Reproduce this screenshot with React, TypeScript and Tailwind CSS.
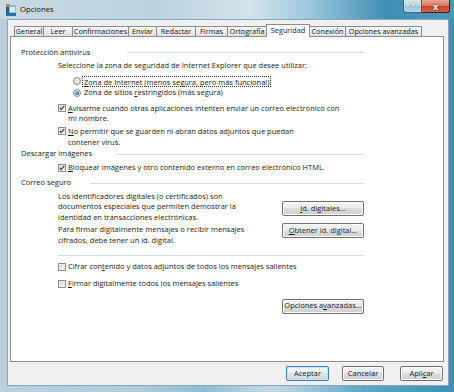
import React from "react";

function Check({ checked }: { checked: boolean }) {
  return (
    <svg width="8" height="8" viewBox="0 0 8 8" className="shrink-0">
      <defs>
        <linearGradient id="cbg" x1="0" y1="0" x2="1" y2="1">
          <stop offset="0" stopColor="#d4d4d4" />
          <stop offset="1" stopColor="#fafafa" />
        </linearGradient>
      </defs>
      <rect x="0.5" y="0.5" width="7" height="7" fill="#f6f6f6" stroke="#8e8f8f" />
      <rect x="1.5" y="1.5" width="5" height="5" fill="url(#cbg)" />
      {checked && (
        <path d="M1.8 3.9 L3.2 5.6 L6.3 1.9" stroke="#2c4f80" strokeWidth="1.3" fill="none" />
      )}
    </svg>
  );
}

function Radio({ checked }: { checked: boolean }) {
  return (
    <svg width="8" height="8" viewBox="0 0 8 8" className="shrink-0">
      <defs>
        <radialGradient id="rdot" cx="0.4" cy="0.35" r="0.7">
          <stop offset="0" stopColor="#9ad0f4" />
          <stop offset="1" stopColor="#1f4f8c" />
        </radialGradient>
      </defs>
      <circle cx="4" cy="4" r="3.5" fill="#e6e6e6" stroke="#8e8f8f" />
      {checked && <circle cx="4" cy="4" r="2.1" fill="url(#rdot)" />}
    </svg>
  );
}

function Btn({ children, className = "", def = false }: { children: React.ReactNode; className?: string; def?: boolean }) {
  return (
    <div
      className={
        "h-[15px] shrink-0 flex items-center justify-center rounded-[2px] border " +
        (def
          ? "border-[#3c7fb1] bg-[linear-gradient(180deg,#f4f8fb_0%,#ecf1f5_50%,#dde5ec_50%,#d0dae3_100%)] shadow-[inset_0_0_0_1px_#c7e3f6] "
          : "border-[#707070] bg-[linear-gradient(180deg,#f3f3f3_0%,#ebebeb_50%,#dddddd_50%,#cfcfcf_100%)] shadow-[inset_0_0_0_1px_#fcfcfc] ") +
        className
      }
    >
      {children}
    </div>
  );
}

function Header({ label, textW }: { label: string; textW: string }) {
  return (
    <div className="flex items-center h-[11px] ml-[10px] w-[343px]">
      <span className={"shrink-0 " + textW}>{label}</span>
      <div className="flex-1 h-px bg-[#d5dfe5]" />
    </div>
  );
}

const tabs: { label: string; w: string; sel?: boolean }[] = [
  { label: "General", w: "w-[30px]" },
  { label: "Leer", w: "w-[30px]" },
  { label: "Confirmaciones", w: "w-[57px]" },
  { label: "Enviar", w: "w-[29px]" },
  { label: "Redactar", w: "w-[40px]" },
  { label: "Firmas", w: "w-[33px]" },
  { label: "Ortografía", w: "w-[40px]" },
  { label: "Seguridad", w: "w-[44px]", sel: true },
  { label: "Conexión", w: "w-[37px]" },
  { label: "Opciones avanzadas", w: "w-[77px]" },
];

export default function App() {
  return (
    <div className="w-[454px] h-[392px] overflow-hidden flex flex-col bg-[linear-gradient(90deg,#b9d0dc_0%,#b0ccda_30%,#8cbdd5_45%,#c4dae5_60%,#5ea6c9_80%,#3f8db5_100%)] font-['Open_Sans','Noto_Sans',sans-serif] text-[7.5px] text-[#1b1b1b]">
      {/* Title bar */}
      <div className="h-[19px] flex items-start shrink-0 bg-[linear-gradient(90deg,#c7d9e3_0%,#bcd2de_35%,#d3e4ec_55%,#9cc8dc_68%,#3f8fb5_85%,#4a97bd_100%)]">
        <svg width="10" height="12" viewBox="0 0 10 12" className="ml-[6px] mt-[4px] shrink-0">
          <rect x="0" y="1" width="10" height="11" fill="#7cc3e6" />
          <rect x="0" y="1" width="3" height="11" fill="#1f5e99" />
          <rect x="0" y="9" width="10" height="3" fill="#2a6fa8" />
          <rect x="0" y="0" width="4" height="3" fill="#e07f2a" />
          <rect x="4" y="3" width="5" height="5" fill="#d8eef9" />
        </svg>
        <span className="ml-[4px] mt-[4px] text-[7.7px] leading-[11px] text-[#101010]">Opciones</span>
        <div className="ml-auto mr-[4px] flex">
          <div className="w-[19px] h-[13px] flex items-center justify-center rounded-bl-[3px] border border-t-0 border-[#3f6379] bg-[linear-gradient(180deg,#d9e8ef_0%,#b7d3e2_50%,#9cc3d8_50%,#b8d9ea_100%)] text-white text-[8px] font-bold [text-shadow:0_0_2px_#2d4d62]">
            ?
          </div>
          <div className="w-[28px] h-[13px] flex items-center justify-center rounded-br-[3px] border border-t-0 border-l-0 border-[#4a1c12] bg-[linear-gradient(180deg,#e8a797_0%,#d8735e_50%,#c3432b_50%,#d8623c_100%)] text-white text-[9px] font-bold leading-none [text-shadow:0_0_2px_#5a1a0c]">
            x
          </div>
        </div>
      </div>

      {/* Client area */}
      <div className="flex-1 ml-[7px] mr-[5px] mb-[6px] bg-[#f0f0f0] border border-[#8ba5b5] flex flex-col pt-[4px]">
        {/* Tabs */}
        <div className="h-[12px] flex items-end ml-[6px] relative z-10 text-[7.3px]">
          {tabs.map((t, i) => (
            <div
              key={t.label}
              className={
                "flex items-center justify-center border border-b-0 border-[#898c95] whitespace-nowrap " +
                t.w +
                (i > 0 ? " -ml-px" : "") +
                (t.sel
                  ? " h-[13px] -mb-px bg-white relative z-10 pb-[1px]"
                  : " h-[10px] bg-[linear-gradient(180deg,#f7f7f7_0%,#ececec_50%,#e1e1e1_100%)]")
              }
            >
              {t.label}
            </div>
          ))}
        </div>

        {/* Panel */}
        <div className="h-[326px] ml-[2px] mr-[4px] bg-white border border-[#898c95] flex flex-col">
          <div className="mt-[10px]">
            <Header label="Protección antivirus" textW="w-[106px]" />
          </div>
          <div className="mt-[2px] ml-[47px] h-[11px] leading-[11px] whitespace-nowrap">
            Seleccione la zona de seguridad de Internet Explorer que desee utilizar:
          </div>
          <div className="mt-[4px] ml-[62px] h-[12px] flex items-center">
            <Radio checked={false} />
            <span className="ml-[1px] px-[1px] h-[11px] leading-[10px] border border-dotted border-[#333] whitespace-nowrap">
              <u className="underline-offset-[1px]">Z</u>ona de Internet (menos segura, pero más funcional)
            </span>
          </div>
          <div className="ml-[62px] h-[12px] flex items-center">
            <Radio checked={true} />
            <span className="ml-[3px] whitespace-nowrap">
              Zona de sitios <u className="underline-offset-[1px]">r</u>estringidos (más segura)
            </span>
          </div>
          <div className="mt-[4px] ml-[47px] flex items-start">
            <div className="h-[10px] flex items-center">
              <Check checked={true} />
            </div>
            <div className="ml-[2px] leading-[10px] whitespace-nowrap">
              <u className="underline-offset-[1px]">A</u>visarme cuando otras aplicaciones intenten enviar un correo electrónico con
              <br />
              mi nombre.
            </div>
          </div>
          <div className="mt-[3px] ml-[47px] flex items-start">
            <div className="h-[10.5px] flex items-center">
              <Check checked={true} />
            </div>
            <div className="ml-[2px] leading-[10.5px] whitespace-nowrap">
              <u className="underline-offset-[1px]">N</u>o permitir que se guarden ni abran datos adjuntos que puedan
              <br />
              contener virus.
            </div>
          </div>
          <div className="mt-[1.5px]">
            <Header label="Descargar imágenes" textW="w-[96px]" />
          </div>
          <div className="mt-[3px] ml-[47px] h-[11px] flex items-center">
            <Check checked={true} />
            <span className="ml-[2px] whitespace-nowrap">
              <u className="underline-offset-[1px]">B</u>loquear imágenes y otro contenido externo en correo electrónico HTML.
            </span>
          </div>
          <div className="mt-[4px]">
            <Header label="Correo seguro" textW="w-[69px]" />
          </div>
          <div className="mt-[2px] w-[353px] flex items-start">
            <div className="ml-[47px] leading-[10.5px] whitespace-nowrap">
              Los identificadores digitales (o certificados) son
              <br />
              documentos especiales que permiten demostrar la
              <br />
              identidad en transacciones electrónicas.
            </div>
            <Btn className="ml-auto w-[82px] mt-[10.5px]">
              <span>
                <u className="underline-offset-[1px]">I</u>d. digitales...
              </span>
            </Btn>
          </div>
          <div className="mt-[2px] w-[353px] flex items-start">
            <div className="ml-[47px] leading-[10.5px] whitespace-nowrap">
              Para firmar digitalmente mensajes o recibir mensajes
              <br />
              cifrados, debe tener un id. digital.
            </div>
            <Btn className="ml-auto w-[82px] -mt-px">
              <span>
                <u className="underline-offset-[1px]">O</u>btener id. digital...
              </span>
            </Btn>
          </div>
          <div className="mt-[10px] ml-[47px] w-[306px] h-px bg-[#d5dfe5]" />
          <div className="mt-[5.5px] ml-[47px] h-[11px] flex items-center">
            <Check checked={false} />
            <span className="ml-[2px] whitespace-nowrap">
              Cifrar con<u className="underline-offset-[1px]">t</u>enido y datos adjuntos de todos los mensajes salientes
            </span>
          </div>
          <div className="mt-[6px] ml-[47px] h-[11px] flex items-center">
            <Check checked={false} />
            <span className="ml-[2px] whitespace-nowrap">
              <u className="underline-offset-[1px]">F</u>irmar digitalmente todos los mensajes salientes
            </span>
          </div>
          <div className="mt-[9px] ml-[271px]">
            <Btn className="w-[82px]">
              <span>
                Opciones a<u className="underline-offset-[1px]">v</u>anzadas...
              </span>
            </Btn>
          </div>
        </div>

        {/* Bottom buttons */}
        <div className="mt-[4px] flex justify-end mr-[5px]">
          <Btn def className="w-[43px]">Aceptar</Btn>
          <Btn className="w-[42px] ml-[13px]">Cancelar</Btn>
          <Btn className="w-[43px] ml-[16px]">
            <span>
              Apli<u className="underline-offset-[1px]">c</u>ar
            </span>
          </Btn>
        </div>
      </div>
    </div>
  );
}
